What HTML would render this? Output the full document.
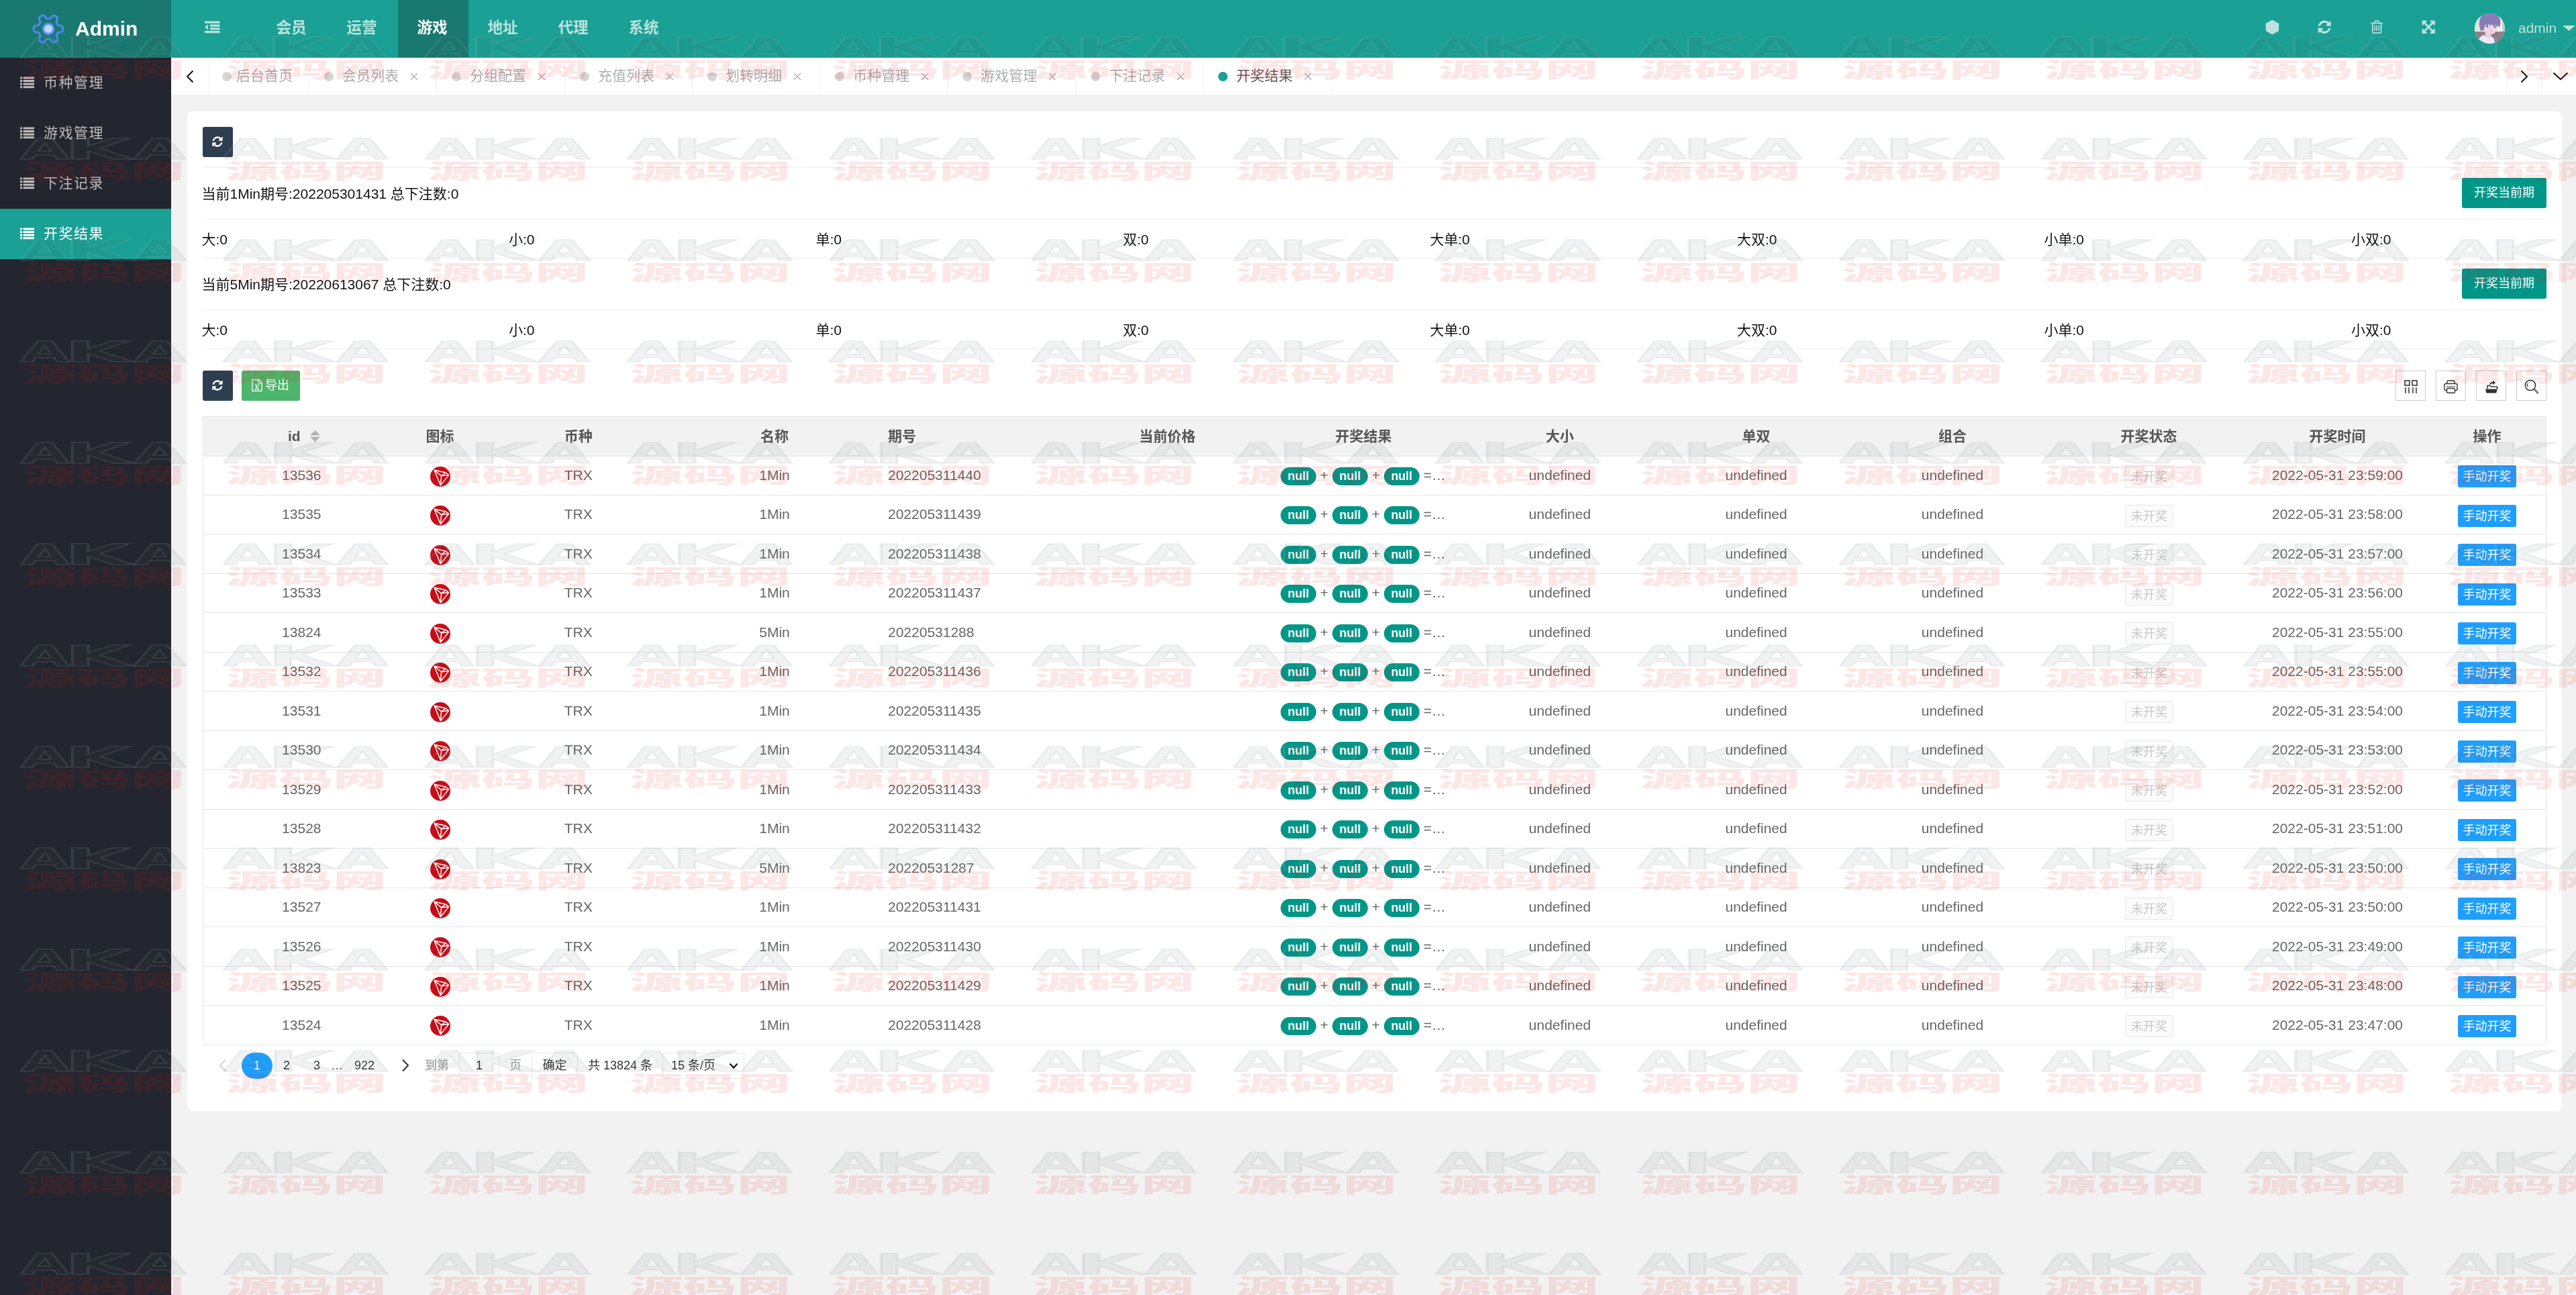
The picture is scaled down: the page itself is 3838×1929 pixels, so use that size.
<!DOCTYPE html>
<html lang="zh-CN"><head><meta charset="utf-8"><title>Admin</title>
<style>
html,body{margin:0;padding:0}
body{width:3838px;height:1929px;overflow:hidden;background:#f2f2f2;position:relative;
 font-family:"Liberation Sans","Noto Sans CJK SC",sans-serif;font-size:21px;color:#333;line-height:1}
*{box-sizing:border-box}
.abs{position:absolute}
#wrap{position:absolute;left:0;top:0;width:3838px;height:1929px;will-change:transform}
#header{position:absolute;left:0;top:0;width:3838px;height:86px;background:#1aa094}
#logo{position:absolute;left:0;top:0;width:255px;height:86px;background:#197971}
#logo .t{position:absolute;left:112px;top:0;line-height:85px;font-size:30px;font-weight:bold;color:#fff}
.nav{position:absolute;top:0;height:86px;width:105px;text-align:center;line-height:83px;font-size:22.5px;font-weight:bold;color:rgba(255,255,255,.7);text-indent:-3px}
.nav.on{background:#197971;color:#fff}
#side{position:absolute;left:0;top:86px;width:255px;height:1843px;background:#23262e}
.mi{position:absolute;left:0;width:255px;height:75px;color:#bfbbbb;font-size:21px;letter-spacing:1.5px;line-height:74px;font-weight:400}
.mi.on{background:#1aa094;color:#fff;font-weight:400}
.mi span{position:absolute;left:65px;top:0}
#tabs{position:absolute;left:255px;top:86px;width:3583px;height:55px;background:#fff}
.tab{position:absolute;top:0;height:55px;border-right:1px solid #f3f3f3;color:#acafb1;font-size:21px;line-height:54.5px;white-space:nowrap}
.tab.on{color:#595959}
.tab i{position:absolute;top:21px;width:14px;height:14px;border-radius:50%;background:#d6d6d6}
.tab.on i{background:#1aa094}
.tab b{position:absolute;font-weight:normal}
.tab svg{position:absolute;top:22px}
#card{position:absolute;left:279px;top:166px;width:3538px;height:1489px;background:#fff;border-radius:8px}
.hr{position:absolute;left:302px;width:3492px;height:1px;background:#eee}
.btn{position:absolute;height:45px;border-radius:3px;color:#fff;font-size:18px;line-height:45px;text-align:center;white-space:nowrap}
.txt{position:absolute;white-space:nowrap;color:#111;font-size:21px;line-height:30px}
#tbl{position:absolute;left:302px;top:620px;width:3492px;height:937px;border:1px solid #e6e6e6;background:#fff}
#thead{position:absolute;left:0;top:0;width:3490px;height:59px;background:#f2f2f2;border-bottom:1px solid #e6e6e6}
.th{position:absolute;top:0;line-height:57px;font-weight:bold;color:#555;font-size:21px;white-space:nowrap;transform:translateX(-50%)}
.tr{position:absolute;left:0;width:3490px;border-bottom:1px solid #e6e6e6}
.td{position:absolute;top:0;color:#666;font-size:21px;white-space:nowrap;transform:translateX(-50%)}
.tdl{position:absolute;top:0;color:#666;font-size:21px;white-space:nowrap}
.bd{display:inline-block;height:27px;line-height:27px;padding:0 10.5px;border-radius:14px;background:#009688;color:#fff;font-size:18px;font-weight:bold;vertical-align:middle;position:relative;top:0.5px}
.wk{position:absolute;width:72px;height:33px;border:1px solid #e6e6e6;background:#fbfbfb;color:#c9c9c9;font-size:18px;line-height:33px;text-align:center;border-radius:3px}
.op{position:absolute;width:87px;height:33px;background:#1e9fff;color:#fff;font-size:18px;line-height:35px;text-align:center;border-radius:3px}
.tool{position:absolute;top:552px;width:45px;height:45px;border:1px solid #ccc;background:#fff}
.pg{position:absolute;top:1568px;height:39px;line-height:39px;font-size:18px;color:#333;white-space:nowrap}
</style></head>
<body>
<div id="wrap">
<div id="header">
<div id="logo"><svg class="abs" style="left:46.5px;top:17.5px" width="50" height="50" viewBox="-25 -25 50 50">
<path d="M0.00 -15.20 L0.53 -15.20 L1.06 -15.20 L1.60 -15.22 L2.15 -15.31 L2.74 -15.55 L3.43 -16.14 L4.29 -17.21 L5.31 -18.52 L6.33 -19.50 L7.25 -19.93 L8.07 -19.98 L8.82 -19.82 L9.54 -19.56 L10.23 -19.24 L10.90 -18.88 L11.55 -18.48 L12.17 -18.04 L12.75 -17.55 L13.26 -16.98 L13.63 -16.25 L13.72 -15.23 L13.38 -13.86 L12.76 -12.32 L12.26 -11.04 L12.10 -10.15 L12.18 -9.52 L12.38 -9.00 L12.63 -8.52 L12.90 -8.06 L13.16 -7.60 L13.43 -7.14 L13.70 -6.68 L13.98 -6.23 L14.33 -5.79 L14.84 -5.40 L15.69 -5.10 L17.05 -4.89 L18.69 -4.66 L20.05 -4.26 L20.89 -3.68 L21.33 -3.00 L21.58 -2.27 L21.71 -1.52 L21.78 -0.76 L21.80 -0.00 L21.78 0.76 L21.71 1.52 L21.58 2.27 L21.33 3.00 L20.89 3.68 L20.05 4.26 L18.69 4.66 L17.05 4.89 L15.69 5.10 L14.84 5.40 L14.33 5.79 L13.98 6.23 L13.70 6.68 L13.43 7.14 L13.16 7.60 L12.90 8.06 L12.63 8.52 L12.38 9.00 L12.18 9.52 L12.10 10.15 L12.26 11.04 L12.76 12.32 L13.38 13.86 L13.72 15.23 L13.63 16.25 L13.26 16.98 L12.75 17.55 L12.17 18.04 L11.55 18.48 L10.90 18.88 L10.23 19.24 L9.54 19.56 L8.82 19.82 L8.07 19.98 L7.25 19.93 L6.33 19.50 L5.31 18.52 L4.29 17.21 L3.43 16.14 L2.74 15.55 L2.15 15.31 L1.60 15.22 L1.06 15.20 L0.53 15.20 L0.00 15.20 L-0.53 15.20 L-1.06 15.20 L-1.60 15.22 L-2.15 15.31 L-2.74 15.55 L-3.43 16.14 L-4.29 17.21 L-5.31 18.52 L-6.33 19.50 L-7.25 19.93 L-8.07 19.98 L-8.82 19.82 L-9.54 19.56 L-10.23 19.24 L-10.90 18.88 L-11.55 18.48 L-12.17 18.04 L-12.75 17.55 L-13.26 16.98 L-13.63 16.25 L-13.72 15.23 L-13.38 13.86 L-12.76 12.32 L-12.26 11.04 L-12.10 10.15 L-12.18 9.52 L-12.38 9.00 L-12.63 8.52 L-12.90 8.06 L-13.16 7.60 L-13.43 7.14 L-13.70 6.68 L-13.98 6.23 L-14.33 5.79 L-14.84 5.40 L-15.69 5.10 L-17.05 4.89 L-18.69 4.66 L-20.05 4.26 L-20.89 3.68 L-21.33 3.00 L-21.58 2.27 L-21.71 1.52 L-21.78 0.76 L-21.80 0.00 L-21.78 -0.76 L-21.71 -1.52 L-21.58 -2.27 L-21.33 -3.00 L-20.89 -3.68 L-20.05 -4.26 L-18.69 -4.66 L-17.05 -4.89 L-15.69 -5.10 L-14.84 -5.40 L-14.33 -5.79 L-13.98 -6.23 L-13.70 -6.68 L-13.43 -7.14 L-13.16 -7.60 L-12.90 -8.06 L-12.63 -8.52 L-12.38 -9.00 L-12.18 -9.52 L-12.10 -10.15 L-12.26 -11.04 L-12.76 -12.32 L-13.38 -13.86 L-13.72 -15.23 L-13.63 -16.25 L-13.26 -16.98 L-12.75 -17.55 L-12.17 -18.04 L-11.55 -18.48 L-10.90 -18.88 L-10.23 -19.24 L-9.54 -19.56 L-8.82 -19.82 L-8.07 -19.98 L-7.25 -19.93 L-6.33 -19.50 L-5.31 -18.52 L-4.29 -17.21 L-3.43 -16.14 L-2.74 -15.55 L-2.15 -15.31 L-1.60 -15.22 L-1.06 -15.20 L-0.53 -15.20Z" fill="none" stroke="#4d89f0" stroke-width="3" stroke-linejoin="round"/>
<circle r="8" fill="#bdd5ff" stroke="#4f8bf5" stroke-width="3"/>
</svg><div class="t">Admin</div></div>
<svg class="abs" style="left:305px;top:30.3px" width="22.5" height="22.5" viewBox="0 0 1792 1792" fill="#bbe3df"><path d="M384 544v576q0 13-9.500 22.500t-22.500 9.500q-14 0-23-9l-288-288q-9-9-9-23t9-23l288-288q9-9 23-9 13 0 22.500 9.500t9.500 22.500zm1408 768v192q0 13-9.500 22.500t-22.500 9.500h-1728q-13 0-22.500-9.500t-9.500-22.500v-192q0-13 9.500-22.500t22.500-9.500h1728q13 0 22.500 9.500t9.500 22.500zm0-384v192q0 13-9.500 22.500t-22.500 9.500h-1088q-13 0-22.500-9.500t-9.500-22.500v-192q0-13 9.500-22.500t22.500-9.500h1088q13 0 22.500 9.500t9.500 22.500zm0-384v192q0 13-9.500 22.500t-22.500 9.500h-1088q-13 0-22.500-9.500t-9.500-22.500v-192q0-13 9.500-22.500t22.500-9.500h1088q13 0 22.500 9.500t9.500 22.500zm0-384v192q0 13-9.500 22.500t-22.500 9.500h-1728q-13 0-22.500-9.500t-9.500-22.500v-192q0-13 9.500-22.500t22.500-9.500h1728q13 0 22.500 9.500t9.500 22.500z"/></svg><div class="nav" style="left:383px">会员</div><div class="nav" style="left:488px">运营</div><div class="nav on" style="left:593px">游戏</div><div class="nav" style="left:698px">地址</div><div class="nav" style="left:803px">代理</div><div class="nav" style="left:908px">系统</div>
<svg class="abs" style="left:3375px;top:29px" width="21" height="23" viewBox="0 0 21 23"><path d="M10.5 0.5L20.2 6v11L10.5 22.5 0.8 17V6z" fill="#bbe3df"/></svg>
<svg class="abs" style="left:3452.3px;top:29.4px" width="22.5" height="22.5" viewBox="0 0 1792 1792" fill="#bbe3df"><path d="M1639 1056q0 5-1 7-64 268-268 434.500t-478 166.500q-146 0-282.500-55t-243.500-157l-129 129q-19 19-45 19t-45-19-19-45v-448q0-26 19-45t45-19h448q26 0 45 19t19 45-19 45l-137 137q71 66 161 102t187 36q134 0 250-65t186-179q11-17 53-117 8-23 30-23h192q13 0 22.500 9.500t9.500 22.500zm25-800v448q0 26-19 45t-45 19h-448q-26 0-45-19t-19-45 19-45l138-138q-148-137-349-137-134 0-250 65t-186 179q-11 17-53 117-8 23-30 23h-199q-13 0-22.500-9.500t-9.500-22.500v-7q65-268 270-434.500t480-166.500q146 0 284 55.500t245 156.500l130-129q19-19 45-19t45 19 19 45z"/></svg>
<svg class="abs" style="left:3529.5px;top:29.4px" width="22.5" height="22.5" viewBox="0 0 1792 1792" fill="#bbe3df"><path d="M704 736v576q0 14-9 23t-23 9h-64q-14 0-23-9t-9-23v-576q0-14 9-23t23-9h64q14 0 23 9t9 23zm256 0v576q0 14-9 23t-23 9h-64q-14 0-23-9t-9-23v-576q0-14 9-23t23-9h64q14 0 23 9t9 23zm256 0v576q0 14-9 23t-23 9h-64q-14 0-23-9t-9-23v-576q0-14 9-23t23-9h64q14 0 23 9t9 23zm128 724v-948h-896v948q0 22 7 40.500t14.500 27 10.500 8.500h832q3 0 10.500-8.500t14.500-27 7-40.500zm-672-1076h448l-48-117q-7-9-17-11h-317q-10 2-17 11zm928 32v64q0 14-9 23t-23 9h-96v948q0 83-47 143.500t-113 60.500h-832q-66 0-113-58.500t-47-141.500v-952h-96q-14 0-23-9t-9-23v-64q0-14 9-23t23-9h309l70-167q15-37 54-63t79-26h320q40 0 79 26t54 63l70 167h309q14 0 23 9t9 23z"/></svg>
<svg class="abs" style="left:3607px;top:29.4px" width="22.5" height="22.5" viewBox="0 0 1792 1792" fill="#bbe3df"><path d="M1411 541l-355 355 355 355 144-144q29-31 70-14 39 17 39 59v448q0 26-19 45t-45 19h-448q-42 0-59-40-17-39 14-69l144-144-355-355-355 355 144 144q31 30 14 69-17 40-59 40h-448q-26 0-45-19t-19-45v-448q0-42 40-59 39-17 69 14l144 144 355-355-355-355-144 144q-19 19-45 19-12 0-24-5-40-17-40-59v-448q0-26 19-45t45-19h448q42 0 59 40 17 39-14 69l-144 144 355 355 355-355-144-144q-31-30-14-69 17-40 59-40h448q26 0 45 19t19 45v448q0 42-39 59-13 5-25 5-26 0-45-19z"/></svg>
<svg class="abs" style="left:3687px;top:20px" width="45" height="45" viewBox="0 0 45 45"><defs><clipPath id="av"><circle cx="22.5" cy="22.5" r="22.5"/></clipPath></defs><g clip-path="url(#av)"><rect width="45" height="45" fill="#f3f3f0"/><rect x="0" y="8" width="9" height="20" fill="#dfe7db"/><rect x="41" y="6" width="4" height="26" fill="#c9cccc"/><rect x="0" y="27.3" width="45" height="18" fill="#8e7f8d"/><rect x="0" y="27" width="45" height="1" fill="#a67f6d"/><path d="M5.9 45V37.6L12.8 32l6 3.5 6-1.5 4.2 3.8 1 7.2z" fill="#efeaf4"/><path d="M15.2 27.5l0.8 6.2 4.5 3.8 3.8-3.5 0.2-5z" fill="#ecd0da"/><ellipse cx="23.6" cy="22.2" rx="9.8" ry="8.8" fill="#efd5dd"/><path d="M7 14Q7 0 22.5 0Q38 0 38.5 13L37.6 21.5 35.2 17.5 33.6 21 31 16.5 28.6 19.5 26 16 23.5 18.5 21 15.8 18.6 18.2 16.2 16.5 14.6 21 13.2 26.5 11.2 24.5 9.8 27Q6.5 21 7 14Z" fill="#857db8"/><ellipse cx="18.7" cy="19.3" rx="1.7" ry="1.5" fill="#6d6ca6"/><ellipse cx="30.3" cy="19.7" rx="1.6" ry="1.5" fill="#6d6ca6"/><ellipse cx="24.8" cy="27.3" rx="0.9" ry="0.6" fill="#c97883"/></g></svg>
<div class="abs" style="left:3752px;top:0;line-height:83px;font-size:21px;color:rgba(255,255,255,.7)">admin</div><svg class="abs" style="left:3818px;top:38px" width="19" height="8" viewBox="0 0 19 8"><path d="M0 0h19L9.5 8z" fill="#bbe3df"/></svg></div>
<div id="side">
<div class="mi" style="top:0px"><svg class="abs" style="left:29.8px;top:26.6px" width="21.4" height="21.4" viewBox="0 0 1792 1792" fill="currentColor"><path d="M256 1312v192q0 13-9.500 22.500t-22.500 9.500h-192q-13 0-22.500-9.500t-9.500-22.500v-192q0-13 9.500-22.500t22.500-9.500h192q13 0 22.500 9.500t9.500 22.500zm0-384v192q0 13-9.500 22.500t-22.500 9.500h-192q-13 0-22.500-9.500t-9.500-22.500v-192q0-13 9.500-22.500t22.500-9.500h192q13 0 22.500 9.500t9.500 22.500zm0-384v192q0 13-9.500 22.500t-22.500 9.500h-192q-13 0-22.500-9.500t-9.500-22.500v-192q0-13 9.500-22.500t22.500-9.500h192q13 0 22.500 9.500t9.500 22.500zm1536 768v192q0 13-9.500 22.500t-22.500 9.500h-1344q-13 0-22.500-9.500t-9.500-22.500v-192q0-13 9.500-22.500t22.500-9.500h1344q13 0 22.500 9.500t9.500 22.500zm-1536-1152v192q0 13-9.500 22.500t-22.500 9.500h-192q-13 0-22.500-9.500t-9.500-22.500v-192q0-13 9.500-22.500t22.500-9.500h192q13 0 22.500 9.500t9.500 22.500zm1536 768v192q0 13-9.500 22.500t-22.500 9.500h-1344q-13 0-22.500-9.500t-9.500-22.500v-192q0-13 9.500-22.500t22.500-9.500h1344q13 0 22.500 9.500t9.500 22.500zm0-384v192q0 13-9.500 22.500t-22.500 9.500h-1344q-13 0-22.500-9.500t-9.500-22.500v-192q0-13 9.500-22.500t22.500-9.500h1344q13 0 22.500 9.500t9.500 22.500zm0-384v192q0 13-9.500 22.500t-22.500 9.500h-1344q-13 0-22.500-9.500t-9.500-22.500v-192q0-13 9.500-22.500t22.500-9.500h1344q13 0 22.500 9.500t9.500 22.500z"/></svg><span>币种管理</span></div>
<div class="mi" style="top:75px"><svg class="abs" style="left:29.8px;top:26.6px" width="21.4" height="21.4" viewBox="0 0 1792 1792" fill="currentColor"><path d="M256 1312v192q0 13-9.500 22.500t-22.500 9.500h-192q-13 0-22.500-9.500t-9.500-22.500v-192q0-13 9.500-22.500t22.500-9.500h192q13 0 22.500 9.500t9.500 22.500zm0-384v192q0 13-9.500 22.500t-22.500 9.500h-192q-13 0-22.500-9.500t-9.500-22.500v-192q0-13 9.500-22.500t22.500-9.500h192q13 0 22.500 9.500t9.500 22.500zm0-384v192q0 13-9.500 22.500t-22.500 9.500h-192q-13 0-22.500-9.500t-9.500-22.500v-192q0-13 9.500-22.500t22.500-9.500h192q13 0 22.500 9.500t9.500 22.500zm1536 768v192q0 13-9.500 22.500t-22.500 9.500h-1344q-13 0-22.500-9.500t-9.500-22.500v-192q0-13 9.500-22.500t22.500-9.500h1344q13 0 22.500 9.500t9.500 22.500zm-1536-1152v192q0 13-9.500 22.500t-22.500 9.500h-192q-13 0-22.500-9.500t-9.500-22.500v-192q0-13 9.500-22.500t22.500-9.500h192q13 0 22.500 9.500t9.500 22.500zm1536 768v192q0 13-9.500 22.500t-22.500 9.500h-1344q-13 0-22.500-9.500t-9.500-22.500v-192q0-13 9.500-22.500t22.500-9.500h1344q13 0 22.500 9.500t9.500 22.500zm0-384v192q0 13-9.500 22.500t-22.500 9.500h-1344q-13 0-22.500-9.500t-9.500-22.500v-192q0-13 9.500-22.500t22.500-9.500h1344q13 0 22.500 9.500t9.500 22.500zm0-384v192q0 13-9.500 22.500t-22.500 9.500h-1344q-13 0-22.500-9.500t-9.500-22.500v-192q0-13 9.500-22.500t22.500-9.500h1344q13 0 22.500 9.500t9.500 22.500z"/></svg><span>游戏管理</span></div>
<div class="mi" style="top:150px"><svg class="abs" style="left:29.8px;top:26.6px" width="21.4" height="21.4" viewBox="0 0 1792 1792" fill="currentColor"><path d="M256 1312v192q0 13-9.500 22.500t-22.500 9.500h-192q-13 0-22.500-9.500t-9.500-22.500v-192q0-13 9.500-22.500t22.500-9.500h192q13 0 22.500 9.500t9.500 22.500zm0-384v192q0 13-9.500 22.500t-22.500 9.500h-192q-13 0-22.500-9.500t-9.500-22.500v-192q0-13 9.500-22.500t22.500-9.500h192q13 0 22.500 9.500t9.500 22.500zm0-384v192q0 13-9.500 22.500t-22.500 9.500h-192q-13 0-22.500-9.500t-9.500-22.500v-192q0-13 9.500-22.500t22.500-9.500h192q13 0 22.500 9.500t9.500 22.500zm1536 768v192q0 13-9.500 22.500t-22.500 9.500h-1344q-13 0-22.500-9.500t-9.500-22.500v-192q0-13 9.500-22.500t22.500-9.500h1344q13 0 22.500 9.500t9.500 22.500zm-1536-1152v192q0 13-9.500 22.500t-22.500 9.500h-192q-13 0-22.500-9.500t-9.500-22.500v-192q0-13 9.500-22.500t22.500-9.500h192q13 0 22.500 9.500t9.500 22.500zm1536 768v192q0 13-9.500 22.500t-22.500 9.500h-1344q-13 0-22.500-9.500t-9.500-22.500v-192q0-13 9.500-22.500t22.500-9.500h1344q13 0 22.500 9.500t9.500 22.500zm0-384v192q0 13-9.500 22.500t-22.500 9.500h-1344q-13 0-22.500-9.500t-9.500-22.500v-192q0-13 9.500-22.500t22.500-9.500h1344q13 0 22.500 9.500t9.500 22.500zm0-384v192q0 13-9.500 22.500t-22.500 9.500h-1344q-13 0-22.500-9.500t-9.500-22.500v-192q0-13 9.500-22.500t22.500-9.500h1344q13 0 22.500 9.500t9.500 22.500z"/></svg><span>下注记录</span></div>
<div class="mi on" style="top:225px"><svg class="abs" style="left:29.8px;top:26.6px" width="21.4" height="21.4" viewBox="0 0 1792 1792" fill="currentColor"><path d="M256 1312v192q0 13-9.500 22.500t-22.500 9.500h-192q-13 0-22.500-9.500t-9.500-22.500v-192q0-13 9.500-22.500t22.500-9.500h192q13 0 22.500 9.500t9.500 22.500zm0-384v192q0 13-9.500 22.500t-22.500 9.500h-192q-13 0-22.500-9.500t-9.500-22.500v-192q0-13 9.500-22.500t22.500-9.500h192q13 0 22.500 9.500t9.500 22.500zm0-384v192q0 13-9.500 22.500t-22.500 9.500h-192q-13 0-22.500-9.500t-9.500-22.500v-192q0-13 9.500-22.500t22.500-9.500h192q13 0 22.500 9.500t9.500 22.500zm1536 768v192q0 13-9.500 22.500t-22.500 9.500h-1344q-13 0-22.500-9.500t-9.500-22.500v-192q0-13 9.500-22.500t22.500-9.500h1344q13 0 22.500 9.500t9.500 22.500zm-1536-1152v192q0 13-9.500 22.500t-22.500 9.500h-192q-13 0-22.500-9.500t-9.500-22.500v-192q0-13 9.500-22.500t22.500-9.500h192q13 0 22.500 9.500t9.500 22.500zm1536 768v192q0 13-9.500 22.500t-22.500 9.500h-1344q-13 0-22.500-9.500t-9.500-22.500v-192q0-13 9.500-22.500t22.500-9.500h1344q13 0 22.500 9.500t9.500 22.500zm0-384v192q0 13-9.500 22.500t-22.500 9.500h-1344q-13 0-22.500-9.500t-9.500-22.500v-192q0-13 9.500-22.500t22.500-9.500h1344q13 0 22.500 9.500t9.500 22.500zm0-384v192q0 13-9.500 22.500t-22.500 9.500h-1344q-13 0-22.500-9.500t-9.500-22.500v-192q0-13 9.500-22.500t22.500-9.500h1344q13 0 22.500 9.500t9.500 22.500z"/></svg><span>开奖结果</span></div>
</div>
<div id="tabs">
<div class="tab" style="left:0;width:56px"><svg style="left:22px;top:18px" width="12" height="20" viewBox="0 0 12 20"><path d="M10.5 1.5L2 10l8.5 8.5" fill="none" stroke="#111" stroke-width="2"/></svg></div><div class="tab" style="left:56px;width:150px"><i style="left:20px"></i><b style="left:41px">后台首页</b></div><div class="tab" style="left:206px;width:190px"><i style="left:22px"></i><b style="left:49px">会员列表</b><svg style="left:150px" width="12" height="12" viewBox="0 0 12 12"><path d="M1 1l10 10M11 1L1 11" stroke="#b5b5b5" stroke-width="1.5" fill="none"/></svg></div><div class="tab" style="left:396px;width:191px"><i style="left:22px"></i><b style="left:49px">分组配置</b><svg style="left:150px" width="12" height="12" viewBox="0 0 12 12"><path d="M1 1l10 10M11 1L1 11" stroke="#b5b5b5" stroke-width="1.5" fill="none"/></svg></div><div class="tab" style="left:587px;width:190px"><i style="left:22px"></i><b style="left:49px">充值列表</b><svg style="left:150px" width="12" height="12" viewBox="0 0 12 12"><path d="M1 1l10 10M11 1L1 11" stroke="#b5b5b5" stroke-width="1.5" fill="none"/></svg></div><div class="tab" style="left:777px;width:190px"><i style="left:22px"></i><b style="left:49px">划转明细</b><svg style="left:150px" width="12" height="12" viewBox="0 0 12 12"><path d="M1 1l10 10M11 1L1 11" stroke="#b5b5b5" stroke-width="1.5" fill="none"/></svg></div><div class="tab" style="left:967px;width:190px"><i style="left:22px"></i><b style="left:49px">币种管理</b><svg style="left:150px" width="12" height="12" viewBox="0 0 12 12"><path d="M1 1l10 10M11 1L1 11" stroke="#b5b5b5" stroke-width="1.5" fill="none"/></svg></div><div class="tab" style="left:1157px;width:191px"><i style="left:22px"></i><b style="left:49px">游戏管理</b><svg style="left:150px" width="12" height="12" viewBox="0 0 12 12"><path d="M1 1l10 10M11 1L1 11" stroke="#b5b5b5" stroke-width="1.5" fill="none"/></svg></div><div class="tab" style="left:1348px;width:190px"><i style="left:22px"></i><b style="left:49px">下注记录</b><svg style="left:150px" width="12" height="12" viewBox="0 0 12 12"><path d="M1 1l10 10M11 1L1 11" stroke="#b5b5b5" stroke-width="1.5" fill="none"/></svg></div><div class="tab on" style="left:1538px;width:190px"><i style="left:22px"></i><b style="left:49px">开奖结果</b><svg style="left:150px" width="12" height="12" viewBox="0 0 12 12"><path d="M1 1l10 10M11 1L1 11" stroke="#b5b5b5" stroke-width="1.5" fill="none"/></svg></div><div class="abs" style="left:3479px;top:0;width:1px;height:55px;background:#f3f3f3"></div><div class="abs" style="left:3531px;top:0;width:1px;height:55px;background:#f3f3f3"></div><svg class="abs" style="left:3500px;top:18px" width="12" height="20" viewBox="0 0 12 20"><path d="M1.5 1.5L10 10l-8.5 8.5" fill="none" stroke="#111" stroke-width="2"/></svg><svg class="abs" style="left:3547.5px;top:21px" width="24" height="14" viewBox="0 0 24 14"><path d="M1.5 1.5L12 11.2 22.5 1.5" fill="none" stroke="#111" stroke-width="2"/></svg></div>
<div id="card"></div>
<div class="btn" style="left:302px;top:189px;width:45px;background:#2c3e50"><svg class="abs" style="left:13.3px;top:12.8px" width="18" height="18" viewBox="0 0 1792 1792" fill="#fff"><path d="M1639 1056q0 5-1 7-64 268-268 434.500t-478 166.500q-146 0-282.500-55t-243.500-157l-129 129q-19 19-45 19t-45-19-19-45v-448q0-26 19-45t45-19h448q26 0 45 19t19 45-19 45l-137 137q71 66 161 102t187 36q134 0 250-65t186-179q11-17 53-117 8-23 30-23h192q13 0 22.500 9.500t9.500 22.500zm25-800v448q0 26-19 45t-45 19h-448q-26 0-45-19t-19-45 19-45l138-138q-148-137-349-137-134 0-250 65t-186 179q-11 17-53 117-8 23-30 23h-199q-13 0-22.500-9.500t-9.500-22.500v-7q65-268 270-434.500t480-166.500q146 0 284 55.500t245 156.500l130-129q19-19 45-19t45 19 19 45z"/></svg></div>
<div class="hr" style="top:249px"></div><div class="hr" style="top:326px"></div><div class="hr" style="top:384px"></div><div class="hr" style="top:461px"></div><div class="hr" style="top:519px"></div>
<div class="txt" style="left:300.5px;top:274px">当前1Min期号:202205301431 总下注数:0</div><div class="btn" style="left:3668px;top:265px;width:126px;background:#009688">开奖当前期</div>
<div class="txt" style="left:300.5px;top:409px">当前5Min期号:20220613067 总下注数:0</div><div class="btn" style="left:3668px;top:400px;width:126px;background:#009688">开奖当前期</div>
<div class="txt" style="left:300.5px;top:342px">大:0</div><div class="txt" style="left:758.0px;top:342px">小:0</div><div class="txt" style="left:1215.5px;top:342px">单:0</div><div class="txt" style="left:1673.0px;top:342px">双:0</div><div class="txt" style="left:2130.5px;top:342px">大单:0</div><div class="txt" style="left:2588.0px;top:342px">大双:0</div><div class="txt" style="left:3045.5px;top:342px">小单:0</div><div class="txt" style="left:3503.0px;top:342px">小双:0</div>
<div class="txt" style="left:300.5px;top:477px">大:0</div><div class="txt" style="left:758.0px;top:477px">小:0</div><div class="txt" style="left:1215.5px;top:477px">单:0</div><div class="txt" style="left:1673.0px;top:477px">双:0</div><div class="txt" style="left:2130.5px;top:477px">大单:0</div><div class="txt" style="left:2588.0px;top:477px">大双:0</div><div class="txt" style="left:3045.5px;top:477px">小单:0</div><div class="txt" style="left:3503.0px;top:477px">小双:0</div>
<div class="btn" style="left:302px;top:552px;width:45px;background:#2c3e50"><svg class="abs" style="left:13.3px;top:12.8px" width="18" height="18" viewBox="0 0 1792 1792" fill="#fff"><path d="M1639 1056q0 5-1 7-64 268-268 434.500t-478 166.500q-146 0-282.500-55t-243.500-157l-129 129q-19 19-45 19t-45-19-19-45v-448q0-26 19-45t45-19h448q26 0 45 19t19 45-19 45l-137 137q71 66 161 102t187 36q134 0 250-65t186-179q11-17 53-117 8-23 30-23h192q13 0 22.500 9.500t9.500 22.500zm25-800v448q0 26-19 45t-45 19h-448q-26 0-45-19t-19-45 19-45l138-138q-148-137-349-137-134 0-250 65t-186 179q-11 17-53 117-8 23-30 23h-199q-13 0-22.500-9.500t-9.500-22.500v-7q65-268 270-434.500t480-166.500q146 0 284 55.500t245 156.500l130-129q19-19 45-19t45 19 19 45z"/></svg></div><div class="btn" style="left:360px;top:552px;width:87px;background:#4db56c;text-align:left"><svg class="abs" style="left:13.7px;top:12.8px" width="18" height="18" viewBox="0 0 1792 1792" fill="#fff"><path d="M1596 380q28 28 48 76t20 88v1152q0 40-28 68t-68 28h-1344q-40 0-68-28t-28-68v-1600q0-40 28-68t68-28h896q40 0 88 20t76 48zm-444-244v376h376q-10-29-22-41l-313-313q-12-12-41-22zm384 1528v-1024h-416q-40 0-68-28t-28-68v-416h-768v1536h1280zm-979-234v106h281v-106h-75l103-161q5-7 10-16.500t7.500-13.500 3.500-4h2q1 4 5 10 2 4 4.500 7.500t6 8 6.500 8.500l107 161h-76v106h291v-106h-68l-192-273 195-282h67v-107h-279v107h74l-103 159q-4 7-10 16.500t-9 13.500l-2 3h-2q-1-4-5-10-6-11-17-23l-106-159h76v-107h-290v107h68l189 272-194 283h-68z"/></svg><span style="position:absolute;left:35px;top:0">导出</span></div>
<div class="tool" style="left:3569px"><svg class="abs" style="left:12px;top:13px" width="20" height="20" viewBox="0 0 20 20" fill="none" stroke="#333" stroke-width="1.6"><rect x="1" y="1" width="7" height="7"/><rect x="12" y="1" width="7" height="7"/><path d="M2 11v9M7 11v9M13 11v9M18 11v9" stroke-width="1.5"/></svg></div>
<div class="tool" style="left:3629px"><svg class="abs" style="left:11px;top:13px" width="21" height="20" viewBox="0 0 21 20" fill="none" stroke="#333" stroke-width="1.4"><path d="M5 5.5V2.5q0-1.5 1.5-1.5h8q1.5 0 1.5 1.5v3"/><rect x="1" y="5.5" width="19" height="10" rx="2"/><rect x="4.5" y="12.5" width="12" height="6.8" rx="1.5" fill="#fff"/><path d="M4 10h13" stroke-width="1"/></svg></div>
<div class="tool" style="left:3689px"><svg class="abs" style="left:12px;top:13px" width="20" height="20" viewBox="0 0 20 20"><path d="M1 13.5h15.5l2.2 0-1.5 6H2.5z" fill="#333"/><path d="M4 13V8.5h4.2l1.3 1.5H18.5v4" fill="none" stroke="#333" stroke-width="1.5"/><path d="M7 8q0-5 5-5V0.8L16.2 4 12 7.2V5Q9 5 7 8z" fill="#333"/></svg></div>
<div class="tool" style="left:3749px"><svg class="abs" style="left:11px;top:12px" width="22" height="22" viewBox="0 0 22 22" fill="none" stroke="#333"><circle cx="9" cy="9" r="7.6" stroke-width="1.5"/><path d="M14.6 14.6l5.2 5.2" stroke-width="2.6" stroke-linecap="round"/><path d="M14.8 14.8l4.8 4.8" stroke="#fff" stroke-width="0.9" stroke-linecap="round"/><path d="M5.2 6.2q-1.6 2.4 0 5" stroke-width="1.2"/></svg></div>
<div id="tbl"><div id="thead"><div class="th" style="left:126.0px;transform:none">id</div><svg class="abs" style="left:159px;top:20px" width="15" height="18" viewBox="0 0 15 18"><path d="M7.5 0L15 7.6H0z" fill="#b2b2b2"/><path d="M7.5 17.4L15 9.8H0z" fill="#b2b2b2"/></svg><div class="th" style="left:352.6px">图标</div><div class="th" style="left:558.7px">币种</div><div class="th" style="left:851.0px">名称</div><div class="th" style="left:1436.3px">当前价格</div><div class="th" style="left:1728.5px">开奖结果</div><div class="th" style="left:2021.0px">大小</div><div class="th" style="left:2313.6px">单双</div><div class="th" style="left:2606.0px">组合</div><div class="th" style="left:2898.5px">开奖状态</div><div class="th" style="left:3179.5px">开奖时间</div><div class="th" style="left:3402.4px">操作</div><div class="th" style="left:1020.0px;transform:none">期号</div></div>
<div class="tr" style="top:58px;height:59px;line-height:57px"><div class="td" style="left:146.3px">13536</div><svg class="abs" style="left:338.0px;top:15.9px" width="30" height="30" viewBox="0 0 30 30"><circle cx="15" cy="15" r="15" fill="#c70d17"/><path d="M6 5.3L23 9 27.6 12.6 15.4 27.9z M6 5.3L16.6 13.8 23 9 M16.6 13.8L15.4 27.9 M16.6 13.8L27.6 12.6" fill="none" stroke="#fff" stroke-width="1.5" stroke-linejoin="round"/></svg><div class="td" style="left:558.7px">TRX</div><div class="td" style="left:851.0px">1Min</div><div class="tdl" style="left:1020.0px">202205311440</div><div class="tdl" style="left:1605.0px"><span class="bd">null</span> + <span class="bd">null</span> + <span class="bd">null</span> =…</div><div class="td" style="left:2021.0px">undefined</div><div class="td" style="left:2313.6px">undefined</div><div class="td" style="left:2606.0px">undefined</div><div class="wk" style="left:2863px;top:14px">未开奖</div><div class="td" style="left:3179.5px">2022-05-31 23:59:00</div><div class="op" style="left:3359px;top:14px">手动开奖</div></div>
<div class="tr" style="top:117px;height:58px;line-height:56px"><div class="td" style="left:146.3px">13535</div><svg class="abs" style="left:338.0px;top:15.4px" width="30" height="30" viewBox="0 0 30 30"><circle cx="15" cy="15" r="15" fill="#c70d17"/><path d="M6 5.3L23 9 27.6 12.6 15.4 27.9z M6 5.3L16.6 13.8 23 9 M16.6 13.8L15.4 27.9 M16.6 13.8L27.6 12.6" fill="none" stroke="#fff" stroke-width="1.5" stroke-linejoin="round"/></svg><div class="td" style="left:558.7px">TRX</div><div class="td" style="left:851.0px">1Min</div><div class="tdl" style="left:1020.0px">202205311439</div><div class="tdl" style="left:1605.0px"><span class="bd">null</span> + <span class="bd">null</span> + <span class="bd">null</span> =…</div><div class="td" style="left:2021.0px">undefined</div><div class="td" style="left:2313.6px">undefined</div><div class="td" style="left:2606.0px">undefined</div><div class="wk" style="left:2863px;top:14px">未开奖</div><div class="td" style="left:3179.5px">2022-05-31 23:58:00</div><div class="op" style="left:3359px;top:14px">手动开奖</div></div>
<div class="tr" style="top:175px;height:59px;line-height:57px"><div class="td" style="left:146.3px">13534</div><svg class="abs" style="left:338.0px;top:15.8px" width="30" height="30" viewBox="0 0 30 30"><circle cx="15" cy="15" r="15" fill="#c70d17"/><path d="M6 5.3L23 9 27.6 12.6 15.4 27.9z M6 5.3L16.6 13.8 23 9 M16.6 13.8L15.4 27.9 M16.6 13.8L27.6 12.6" fill="none" stroke="#fff" stroke-width="1.5" stroke-linejoin="round"/></svg><div class="td" style="left:558.7px">TRX</div><div class="td" style="left:851.0px">1Min</div><div class="tdl" style="left:1020.0px">202205311438</div><div class="tdl" style="left:1605.0px"><span class="bd">null</span> + <span class="bd">null</span> + <span class="bd">null</span> =…</div><div class="td" style="left:2021.0px">undefined</div><div class="td" style="left:2313.6px">undefined</div><div class="td" style="left:2606.0px">undefined</div><div class="wk" style="left:2863px;top:14px">未开奖</div><div class="td" style="left:3179.5px">2022-05-31 23:57:00</div><div class="op" style="left:3359px;top:14px">手动开奖</div></div>
<div class="tr" style="top:234px;height:58px;line-height:56px"><div class="td" style="left:146.3px">13533</div><svg class="abs" style="left:338.0px;top:15.3px" width="30" height="30" viewBox="0 0 30 30"><circle cx="15" cy="15" r="15" fill="#c70d17"/><path d="M6 5.3L23 9 27.6 12.6 15.4 27.9z M6 5.3L16.6 13.8 23 9 M16.6 13.8L15.4 27.9 M16.6 13.8L27.6 12.6" fill="none" stroke="#fff" stroke-width="1.5" stroke-linejoin="round"/></svg><div class="td" style="left:558.7px">TRX</div><div class="td" style="left:851.0px">1Min</div><div class="tdl" style="left:1020.0px">202205311437</div><div class="tdl" style="left:1605.0px"><span class="bd">null</span> + <span class="bd">null</span> + <span class="bd">null</span> =…</div><div class="td" style="left:2021.0px">undefined</div><div class="td" style="left:2313.6px">undefined</div><div class="td" style="left:2606.0px">undefined</div><div class="wk" style="left:2863px;top:14px">未开奖</div><div class="td" style="left:3179.5px">2022-05-31 23:56:00</div><div class="op" style="left:3359px;top:14px">手动开奖</div></div>
<div class="tr" style="top:292px;height:59px;line-height:57px"><div class="td" style="left:146.3px">13824</div><svg class="abs" style="left:338.0px;top:15.7px" width="30" height="30" viewBox="0 0 30 30"><circle cx="15" cy="15" r="15" fill="#c70d17"/><path d="M6 5.3L23 9 27.6 12.6 15.4 27.9z M6 5.3L16.6 13.8 23 9 M16.6 13.8L15.4 27.9 M16.6 13.8L27.6 12.6" fill="none" stroke="#fff" stroke-width="1.5" stroke-linejoin="round"/></svg><div class="td" style="left:558.7px">TRX</div><div class="td" style="left:851.0px">5Min</div><div class="tdl" style="left:1020.0px">20220531288</div><div class="tdl" style="left:1605.0px"><span class="bd">null</span> + <span class="bd">null</span> + <span class="bd">null</span> =…</div><div class="td" style="left:2021.0px">undefined</div><div class="td" style="left:2313.6px">undefined</div><div class="td" style="left:2606.0px">undefined</div><div class="wk" style="left:2863px;top:14px">未开奖</div><div class="td" style="left:3179.5px">2022-05-31 23:55:00</div><div class="op" style="left:3359px;top:14px">手动开奖</div></div>
<div class="tr" style="top:351px;height:58px;line-height:56px"><div class="td" style="left:146.3px">13532</div><svg class="abs" style="left:338.0px;top:15.2px" width="30" height="30" viewBox="0 0 30 30"><circle cx="15" cy="15" r="15" fill="#c70d17"/><path d="M6 5.3L23 9 27.6 12.6 15.4 27.9z M6 5.3L16.6 13.8 23 9 M16.6 13.8L15.4 27.9 M16.6 13.8L27.6 12.6" fill="none" stroke="#fff" stroke-width="1.5" stroke-linejoin="round"/></svg><div class="td" style="left:558.7px">TRX</div><div class="td" style="left:851.0px">1Min</div><div class="tdl" style="left:1020.0px">202205311436</div><div class="tdl" style="left:1605.0px"><span class="bd">null</span> + <span class="bd">null</span> + <span class="bd">null</span> =…</div><div class="td" style="left:2021.0px">undefined</div><div class="td" style="left:2313.6px">undefined</div><div class="td" style="left:2606.0px">undefined</div><div class="wk" style="left:2863px;top:14px">未开奖</div><div class="td" style="left:3179.5px">2022-05-31 23:55:00</div><div class="op" style="left:3359px;top:14px">手动开奖</div></div>
<div class="tr" style="top:409px;height:59px;line-height:57px"><div class="td" style="left:146.3px">13531</div><svg class="abs" style="left:338.0px;top:15.7px" width="30" height="30" viewBox="0 0 30 30"><circle cx="15" cy="15" r="15" fill="#c70d17"/><path d="M6 5.3L23 9 27.6 12.6 15.4 27.9z M6 5.3L16.6 13.8 23 9 M16.6 13.8L15.4 27.9 M16.6 13.8L27.6 12.6" fill="none" stroke="#fff" stroke-width="1.5" stroke-linejoin="round"/></svg><div class="td" style="left:558.7px">TRX</div><div class="td" style="left:851.0px">1Min</div><div class="tdl" style="left:1020.0px">202205311435</div><div class="tdl" style="left:1605.0px"><span class="bd">null</span> + <span class="bd">null</span> + <span class="bd">null</span> =…</div><div class="td" style="left:2021.0px">undefined</div><div class="td" style="left:2313.6px">undefined</div><div class="td" style="left:2606.0px">undefined</div><div class="wk" style="left:2863px;top:14px">未开奖</div><div class="td" style="left:3179.5px">2022-05-31 23:54:00</div><div class="op" style="left:3359px;top:14px">手动开奖</div></div>
<div class="tr" style="top:468px;height:58px;line-height:56px"><div class="td" style="left:146.3px">13530</div><svg class="abs" style="left:338.0px;top:15.1px" width="30" height="30" viewBox="0 0 30 30"><circle cx="15" cy="15" r="15" fill="#c70d17"/><path d="M6 5.3L23 9 27.6 12.6 15.4 27.9z M6 5.3L16.6 13.8 23 9 M16.6 13.8L15.4 27.9 M16.6 13.8L27.6 12.6" fill="none" stroke="#fff" stroke-width="1.5" stroke-linejoin="round"/></svg><div class="td" style="left:558.7px">TRX</div><div class="td" style="left:851.0px">1Min</div><div class="tdl" style="left:1020.0px">202205311434</div><div class="tdl" style="left:1605.0px"><span class="bd">null</span> + <span class="bd">null</span> + <span class="bd">null</span> =…</div><div class="td" style="left:2021.0px">undefined</div><div class="td" style="left:2313.6px">undefined</div><div class="td" style="left:2606.0px">undefined</div><div class="wk" style="left:2863px;top:14px">未开奖</div><div class="td" style="left:3179.5px">2022-05-31 23:53:00</div><div class="op" style="left:3359px;top:14px">手动开奖</div></div>
<div class="tr" style="top:526px;height:59px;line-height:57px"><div class="td" style="left:146.3px">13529</div><svg class="abs" style="left:338.0px;top:15.6px" width="30" height="30" viewBox="0 0 30 30"><circle cx="15" cy="15" r="15" fill="#c70d17"/><path d="M6 5.3L23 9 27.6 12.6 15.4 27.9z M6 5.3L16.6 13.8 23 9 M16.6 13.8L15.4 27.9 M16.6 13.8L27.6 12.6" fill="none" stroke="#fff" stroke-width="1.5" stroke-linejoin="round"/></svg><div class="td" style="left:558.7px">TRX</div><div class="td" style="left:851.0px">1Min</div><div class="tdl" style="left:1020.0px">202205311433</div><div class="tdl" style="left:1605.0px"><span class="bd">null</span> + <span class="bd">null</span> + <span class="bd">null</span> =…</div><div class="td" style="left:2021.0px">undefined</div><div class="td" style="left:2313.6px">undefined</div><div class="td" style="left:2606.0px">undefined</div><div class="wk" style="left:2863px;top:14px">未开奖</div><div class="td" style="left:3179.5px">2022-05-31 23:52:00</div><div class="op" style="left:3359px;top:14px">手动开奖</div></div>
<div class="tr" style="top:585px;height:58px;line-height:56px"><div class="td" style="left:146.3px">13528</div><svg class="abs" style="left:338.0px;top:15.0px" width="30" height="30" viewBox="0 0 30 30"><circle cx="15" cy="15" r="15" fill="#c70d17"/><path d="M6 5.3L23 9 27.6 12.6 15.4 27.9z M6 5.3L16.6 13.8 23 9 M16.6 13.8L15.4 27.9 M16.6 13.8L27.6 12.6" fill="none" stroke="#fff" stroke-width="1.5" stroke-linejoin="round"/></svg><div class="td" style="left:558.7px">TRX</div><div class="td" style="left:851.0px">1Min</div><div class="tdl" style="left:1020.0px">202205311432</div><div class="tdl" style="left:1605.0px"><span class="bd">null</span> + <span class="bd">null</span> + <span class="bd">null</span> =…</div><div class="td" style="left:2021.0px">undefined</div><div class="td" style="left:2313.6px">undefined</div><div class="td" style="left:2606.0px">undefined</div><div class="wk" style="left:2863px;top:14px">未开奖</div><div class="td" style="left:3179.5px">2022-05-31 23:51:00</div><div class="op" style="left:3359px;top:14px">手动开奖</div></div>
<div class="tr" style="top:643px;height:59px;line-height:57px"><div class="td" style="left:146.3px">13823</div><svg class="abs" style="left:338.0px;top:15.5px" width="30" height="30" viewBox="0 0 30 30"><circle cx="15" cy="15" r="15" fill="#c70d17"/><path d="M6 5.3L23 9 27.6 12.6 15.4 27.9z M6 5.3L16.6 13.8 23 9 M16.6 13.8L15.4 27.9 M16.6 13.8L27.6 12.6" fill="none" stroke="#fff" stroke-width="1.5" stroke-linejoin="round"/></svg><div class="td" style="left:558.7px">TRX</div><div class="td" style="left:851.0px">5Min</div><div class="tdl" style="left:1020.0px">20220531287</div><div class="tdl" style="left:1605.0px"><span class="bd">null</span> + <span class="bd">null</span> + <span class="bd">null</span> =…</div><div class="td" style="left:2021.0px">undefined</div><div class="td" style="left:2313.6px">undefined</div><div class="td" style="left:2606.0px">undefined</div><div class="wk" style="left:2863px;top:14px">未开奖</div><div class="td" style="left:3179.5px">2022-05-31 23:50:00</div><div class="op" style="left:3359px;top:14px">手动开奖</div></div>
<div class="tr" style="top:702px;height:58px;line-height:56px"><div class="td" style="left:146.3px">13527</div><svg class="abs" style="left:338.0px;top:15.0px" width="30" height="30" viewBox="0 0 30 30"><circle cx="15" cy="15" r="15" fill="#c70d17"/><path d="M6 5.3L23 9 27.6 12.6 15.4 27.9z M6 5.3L16.6 13.8 23 9 M16.6 13.8L15.4 27.9 M16.6 13.8L27.6 12.6" fill="none" stroke="#fff" stroke-width="1.5" stroke-linejoin="round"/></svg><div class="td" style="left:558.7px">TRX</div><div class="td" style="left:851.0px">1Min</div><div class="tdl" style="left:1020.0px">202205311431</div><div class="tdl" style="left:1605.0px"><span class="bd">null</span> + <span class="bd">null</span> + <span class="bd">null</span> =…</div><div class="td" style="left:2021.0px">undefined</div><div class="td" style="left:2313.6px">undefined</div><div class="td" style="left:2606.0px">undefined</div><div class="wk" style="left:2863px;top:14px">未开奖</div><div class="td" style="left:3179.5px">2022-05-31 23:50:00</div><div class="op" style="left:3359px;top:14px">手动开奖</div></div>
<div class="tr" style="top:760px;height:59px;line-height:57px"><div class="td" style="left:146.3px">13526</div><svg class="abs" style="left:338.0px;top:15.4px" width="30" height="30" viewBox="0 0 30 30"><circle cx="15" cy="15" r="15" fill="#c70d17"/><path d="M6 5.3L23 9 27.6 12.6 15.4 27.9z M6 5.3L16.6 13.8 23 9 M16.6 13.8L15.4 27.9 M16.6 13.8L27.6 12.6" fill="none" stroke="#fff" stroke-width="1.5" stroke-linejoin="round"/></svg><div class="td" style="left:558.7px">TRX</div><div class="td" style="left:851.0px">1Min</div><div class="tdl" style="left:1020.0px">202205311430</div><div class="tdl" style="left:1605.0px"><span class="bd">null</span> + <span class="bd">null</span> + <span class="bd">null</span> =…</div><div class="td" style="left:2021.0px">undefined</div><div class="td" style="left:2313.6px">undefined</div><div class="td" style="left:2606.0px">undefined</div><div class="wk" style="left:2863px;top:14px">未开奖</div><div class="td" style="left:3179.5px">2022-05-31 23:49:00</div><div class="op" style="left:3359px;top:14px">手动开奖</div></div>
<div class="tr" style="top:819px;height:58px;line-height:56px"><div class="td" style="left:146.3px">13525</div><svg class="abs" style="left:338.0px;top:14.9px" width="30" height="30" viewBox="0 0 30 30"><circle cx="15" cy="15" r="15" fill="#c70d17"/><path d="M6 5.3L23 9 27.6 12.6 15.4 27.9z M6 5.3L16.6 13.8 23 9 M16.6 13.8L15.4 27.9 M16.6 13.8L27.6 12.6" fill="none" stroke="#fff" stroke-width="1.5" stroke-linejoin="round"/></svg><div class="td" style="left:558.7px">TRX</div><div class="td" style="left:851.0px">1Min</div><div class="tdl" style="left:1020.0px">202205311429</div><div class="tdl" style="left:1605.0px"><span class="bd">null</span> + <span class="bd">null</span> + <span class="bd">null</span> =…</div><div class="td" style="left:2021.0px">undefined</div><div class="td" style="left:2313.6px">undefined</div><div class="td" style="left:2606.0px">undefined</div><div class="wk" style="left:2863px;top:14px">未开奖</div><div class="td" style="left:3179.5px">2022-05-31 23:48:00</div><div class="op" style="left:3359px;top:14px">手动开奖</div></div>
<div class="tr" style="top:877px;height:59px;line-height:57px"><div class="td" style="left:146.3px">13524</div><svg class="abs" style="left:338.0px;top:15.3px" width="30" height="30" viewBox="0 0 30 30"><circle cx="15" cy="15" r="15" fill="#c70d17"/><path d="M6 5.3L23 9 27.6 12.6 15.4 27.9z M6 5.3L16.6 13.8 23 9 M16.6 13.8L15.4 27.9 M16.6 13.8L27.6 12.6" fill="none" stroke="#fff" stroke-width="1.5" stroke-linejoin="round"/></svg><div class="td" style="left:558.7px">TRX</div><div class="td" style="left:851.0px">1Min</div><div class="tdl" style="left:1020.0px">202205311428</div><div class="tdl" style="left:1605.0px"><span class="bd">null</span> + <span class="bd">null</span> + <span class="bd">null</span> =…</div><div class="td" style="left:2021.0px">undefined</div><div class="td" style="left:2313.6px">undefined</div><div class="td" style="left:2606.0px">undefined</div><div class="wk" style="left:2863px;top:14px">未开奖</div><div class="td" style="left:3179.5px">2022-05-31 23:47:00</div><div class="op" style="left:3359px;top:14px">手动开奖</div></div>
</div>
<svg class="abs" style="left:326px;top:1577px" width="12" height="20" viewBox="0 0 12 20"><path d="M10 1.5L2 10l8 8.5" fill="none" stroke="#d2d2d2" stroke-width="2"/></svg>
<div class="pg" style="left:360px;width:46px;text-align:center;background:#1e9fff;color:#fff;border-radius:20px">1</div>
<div class="pg" style="left:427px;transform:translateX(-50%)">2</div>
<div class="pg" style="left:472px;transform:translateX(-50%)">3</div>
<div class="pg" style="left:502px;transform:translateX(-50%);color:#555">…</div>
<div class="pg" style="left:543px;transform:translateX(-50%)">922</div>
<svg class="abs" style="left:598px;top:1577px" width="12" height="20" viewBox="0 0 12 20"><path d="M2 1.5L10 10l-8 8.5" fill="none" stroke="#333" stroke-width="2"/></svg>
<div class="pg" style="left:633px;color:#999">到第</div>
<div class="pg" style="left:684px;width:60px;border:1px solid #e6e6e6;border-radius:3px;text-align:center;line-height:37px;background:#fff">1</div>
<div class="pg" style="left:759px;color:#999">页</div>
<div class="pg" style="left:792px;width:69px;border:1px solid #e6e6e6;border-radius:3px;text-align:center;line-height:37px;background:#fff">确定</div>
<div class="pg" style="left:876px">共 13824 条</div>
<div class="pg" style="left:987px;width:122px;border:1px solid #e6e6e6;border-radius:3px;line-height:37px;background:#fff;padding-left:12px">15 条/页<svg class="abs" style="left:98px;top:14px" width="14" height="10" viewBox="0 0 14 10"><path d="M1.5 1.5L7 7.5l5.5-6" fill="none" stroke="#111" stroke-width="2.2"/></svg></div>
</div>
<svg class="abs" style="left:0;top:0;pointer-events:none" width="3838" height="1929">
<defs><pattern id="wmp" x="0" y="0" width="301" height="151" patternUnits="userSpaceOnUse">
<g font-family="'DejaVu Sans','Liberation Sans',sans-serif" font-weight="bold" font-size="43">
<g fill="none" stroke="#fff" stroke-opacity="0.09" stroke-width="1.4" transform="translate(-1.2,-0.6)">
<text x="31.5" y="86.2" textLength="73" lengthAdjust="spacingAndGlyphs">A</text>
<text x="97" y="86.2" textLength="99" lengthAdjust="spacingAndGlyphs">K</text>
<text x="200.5" y="86.2" textLength="77" lengthAdjust="spacingAndGlyphs">A</text>
</g>
<g fill="#3c4a50" fill-opacity="0.075" stroke="#3c4a50" stroke-opacity="0.07" stroke-width="1.6">
<text x="31.5" y="86.2" textLength="73" lengthAdjust="spacingAndGlyphs">A</text>
<text x="97" y="86.2" textLength="99" lengthAdjust="spacingAndGlyphs">K</text>
<text x="200.5" y="86.2" textLength="77" lengthAdjust="spacingAndGlyphs">A</text>
</g>
</g><text x="35" y="114.6" font-family="'Noto Sans CJK SC','WenQuanYi Zen Hei',sans-serif" font-weight="900" font-size="30.5" textLength="240" lengthAdjust="spacingAndGlyphs" fill="#e61e1e" fill-opacity="0.11">源码网</text>
</pattern></defs>
<rect width="3838" height="1929" fill="url(#wmp)"/></svg>
</body></html>
